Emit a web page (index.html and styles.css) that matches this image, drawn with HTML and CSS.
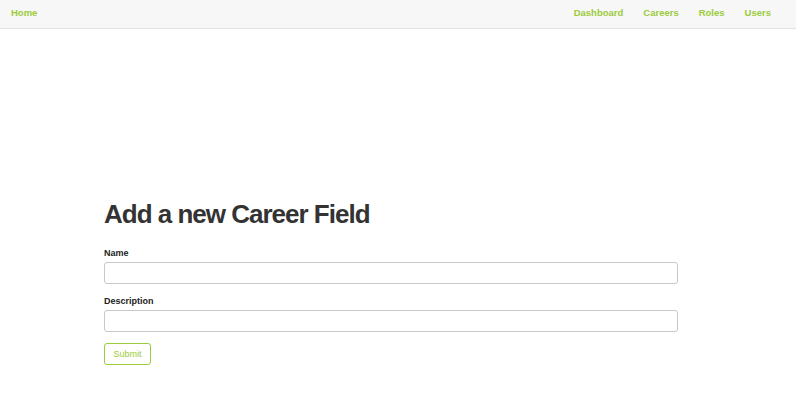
FILE: index.html
```html
<!DOCTYPE html>
<html>
<head>
<meta charset="utf-8">
<link rel="stylesheet" href="styles.css">
</head>
<body>
<nav class="navbar">
  <a class="nav-link" href="#">Home</a>
  <div class="nav-right">
    <a class="nav-link" href="#">Dashboard</a>
    <a class="nav-link" href="#">Careers</a>
    <a class="nav-link" href="#">Roles</a>
    <a class="nav-link" href="#">Users</a>
  </div>
</nav>
<main class="container">
  <h1 class="title">Add a new Career Field</h1>
  <form class="form">
    <label class="label">Name</label>
    <input class="input" type="text">
    <label class="label">Description</label>
    <input class="input" type="text">
    <button class="btn" type="button">Submit</button>
  </form>
</main>
</body>
</html>
```
FILE: styles.css
```css
* { box-sizing: border-box; }
body {
  margin: 0;
  font-family: "Liberation Sans", Arial, Helvetica, sans-serif;
  background: #fff;
  color: #333;
}
.navbar {
  height: 29px;
  background: #f7f7f7;
  border-bottom: 1px solid #e2e2e2;
  display: flex;
  align-items: center;
  justify-content: space-between;
  padding: 0 25px 4px 11px;
}
.nav-right {
  display: flex;
  gap: 20px;
}
.nav-link {
  color: #9ccb3b;
  font-weight: bold;
  font-size: 9.5px;
  text-decoration: none;
}
.container {
  padding: 170px 0 0 104px;
  width: 678px;
}
.title {
  font-size: 26px;
  letter-spacing: -1px;
  font-weight: bold;
  color: #333;
  margin: 0 0 18px 0;
  line-height: 30px;
}
.form {
  display: flex;
  flex-direction: column;
  align-items: flex-start;
}
.label {
  font-size: 9px;
  font-weight: bold;
  color: #222;
  line-height: 12px;
  margin-bottom: 3px;
}
.input {
  width: 574px;
  height: 22px;
  border: 1px solid #c8c8c8;
  border-radius: 3px;
  margin: 0 0 11px 0;
  padding: 0 6px;
  background: #fff;
}
.btn {
  width: 47px;
  height: 22px;
  border: 1px solid #9ccb3b;
  border-radius: 3px;
  background: #fff;
  color: #9ccb3b;
  font-family: "Liberation Sans", Arial, sans-serif;
  font-size: 9px;
  padding: 0;
}
```
